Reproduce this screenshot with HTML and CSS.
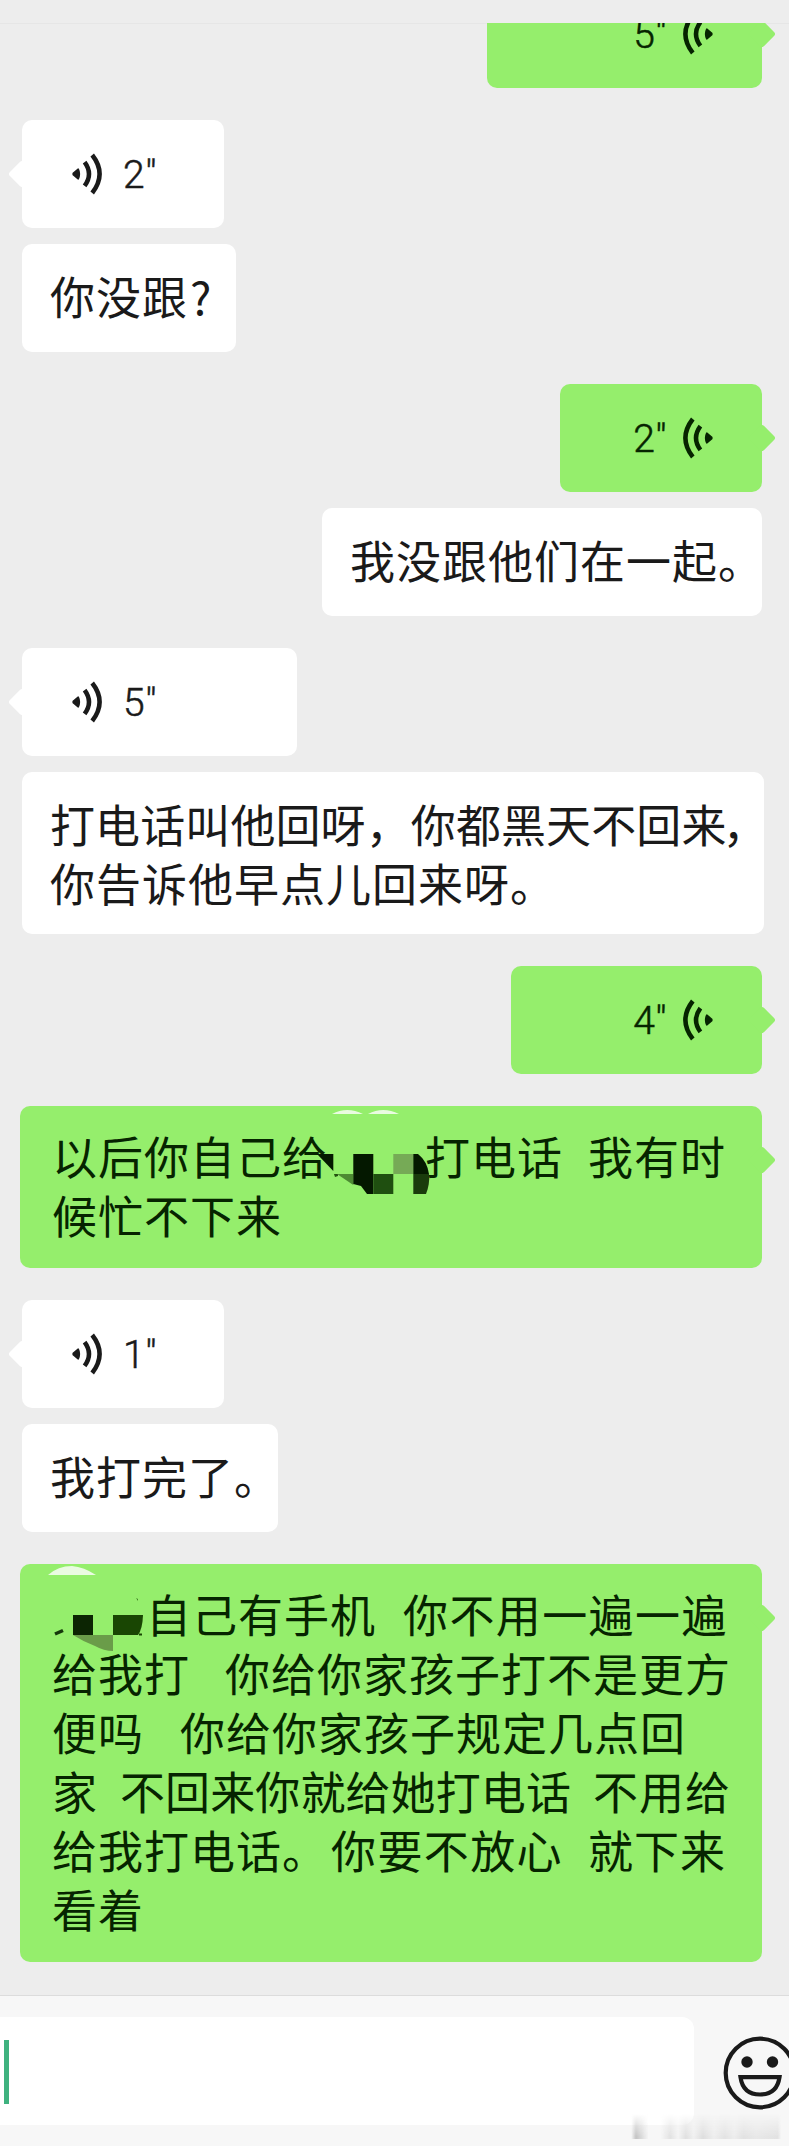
FILE: index.html
```html
<!DOCTYPE html>
<html lang="zh-CN">
<head>
<meta charset="utf-8">
<title>聊天</title>
<link rel="stylesheet" href="styles.css">
</head>
<body>
<svg class="defs" width="0" height="0">
  <symbol id="wave" viewBox="0 0 30 42">
    <path d="M1.500 20 L6.200 16.200 Q8.500 21 6.200 25.800 L1.500 22 Q0.800 21 1.500 20Z" fill="currentColor" stroke="currentColor" stroke-width="1.600" stroke-linejoin="round"/>
    <path d="M12.600 9.100 Q21.400 21 12.600 32.900 M20.200 2 Q35 21 20.200 40" fill="none" stroke="currentColor" stroke-width="4.500"/>
  </symbol>
</svg>
<div class="screen">
  <header class="top"></header>
  <main class="chat">
    <div class="bubble voice mine cut w275"><span class="sec">5"</span><svg class="wave"><use href="#wave"/></svg></div>

    <div class="bubble voice theirs w202"><svg class="wave"><use href="#wave"/></svg><span class="sec">2"</span></div>
    <div class="bubble note left w214"><p class="line">你没跟<span class="gap2">?</span></p></div>

    <div class="bubble voice mine w202"><span class="sec">2"</span><svg class="wave"><use href="#wave"/></svg></div>
    <div class="bubble note right w440"><p class="line">我没跟他们在一起。</p></div>

    <div class="bubble voice theirs w275"><svg class="wave"><use href="#wave"/></svg><span class="sec">5"</span></div>
    <div class="bubble note left w742"><p class="line tight">打电话叫他回呀，你都黑天不回来<span class="pull">，</span></p><p class="line">你告诉他早点儿回来呀。</p></div>

    <div class="bubble voice mine w251"><span class="sec">4"</span><svg class="wave"><use href="#wave"/></svg></div>
    <div class="bubble text mine w742">
      <p class="line"><span>以后你自己给</span><span class="gap97">打电话</span><span class="gap25">我有时</span></p>
      <p class="line"><span>候忙不下来</span></p>
      <svg class="mosaic" width="742" height="162" viewBox="20 1106 742 162">
        <path d="M332 1114 Q347 1106 363 1114Z M368 1114 Q383 1106 399 1114Z" fill="#e9fbe0"/>
        <path d="M325 1154 H334 V1180 H325Z" fill="#95ee6c"/>
        <path d="M317 1154 H333.300 V1171Z" fill="#041800"/>
        <path d="M334 1174 H338 V1176 L335 1177Z" fill="#23500f"/>
        <path d="M337 1174 H353.300 V1185Z" fill="#4d8a33"/>
        <path d="M353.300 1154 H373.300 V1194 H367 L361 1186 L353.300 1184Z" fill="#041800"/>
        <path d="M373.300 1174 h20 v20 h-20Z" fill="#1f4f10"/>
        <path d="M393.300 1154 h20 v20 h-20Z" fill="#76aa56"/>
        <path d="M413.300 1154 H418 Q427 1161 429 1174 H413.300Z" fill="#051900"/>
        <path d="M413.300 1174 H429 Q430 1184 426 1194 H413.300Z" fill="#1a3b0c"/>
      </svg>
    </div>

    <div class="bubble voice theirs w202"><svg class="wave"><use href="#wave"/></svg><span class="sec">1"</span></div>
    <div class="bubble note left w256"><p class="line">我打完了。</p></div>

    <div class="bubble text mine w742">
      <p class="line"><span class="gap94">自己有手机</span><span class="gap27 loose">你不用一遍一遍</span></p>
      <p class="line"><span>给我打</span><span class="gap35">你给你家孩子打不是更方</span></p>
      <p class="line"><span>便吗</span><span class="gap36">你给你家孩子规定几点回</span></p>
      <p class="line"><span>家</span><span class="gap22 tight">不回来你就给她打电话</span><span class="gap22">不用给</span></p>
      <p class="line"><span>给我打电话。</span><span class="gap3 loose">你要不放心</span><span class="gap25">就下来</span></p>
      <p class="line"><span>看着</span></p>
      <svg class="mosaic" width="742" height="398" viewBox="20 1564 742 398">
        <path d="M48 1575 Q58 1566 72 1566 Q84 1567 96 1575Z" fill="#eafbe2"/>
        <path d="M55 1634 L63 1630.500" stroke="#15380a" stroke-width="3.500"/>
        <path d="M73 1615 h20 v20 h-20Z" fill="#0c2503"/>
        <path d="M113 1615 H143 Q142.500 1629 138 1635 H113Z" fill="#194603"/>
        <path d="M139 1633.500 h3 v2 h-3Z" fill="#194603"/>
        <path d="M73 1635 H113 V1651 Q104 1651 95 1646 Q84 1642 73 1635Z" fill="#6a9c49"/>
        <path d="M136 1598 l2 1 v2Z" fill="#3d7a22"/>
      </svg>
    </div>
  </main>
  <footer class="composer">
    <div class="field"><i class="caret"></i></div>
    <svg class="smile" width="74" height="74" viewBox="0 0 74 74">
      <circle cx="37" cy="37" r="34.300" fill="none" stroke="#1a1a1a" stroke-width="4.200"/>
      <circle cx="24" cy="26" r="5.700" fill="#1a1a1a"/>
      <circle cx="49.500" cy="26" r="5.700" fill="#1a1a1a"/>
      <path d="M17.500 41.200 H56.500 Q54 58.500 37 58.500 Q20 58.500 17.500 41.200Z" fill="none" stroke="#1a1a1a" stroke-width="4.200"/>
    </svg>
    <div class="smudge"></div>
  </footer>
</div>
</body>
</html>
```

FILE: styles.css
```css
* { box-sizing: border-box; margin: 0; padding: 0; }

body {
  background: #ededed;
  color: #1a1a1a;
  font-family: "Noto Sans CJK SC", sans-serif;
}

.defs { position: absolute; }

.screen {
  display: flex;
  flex-direction: column;
  width: 789px;
  height: 2146px;
  overflow: hidden;
}

.top {
  flex: none;
  height: 24px;
  border-bottom: 1px solid #e6e6e6;
}

.chat {
  display: flex;
  flex-direction: column;
  flex: 1;
  margin-top: -1px;
  padding: 0 26px 0 22px;
  overflow: hidden;
}

.bubble {
  position: relative;
  flex: none;
  min-height: 108px;
  margin-top: 32px;
  border-radius: 10px;
  background: #fff;
}

.note { margin-top: 16px; padding: 22px 0 22px 28px; }
.note.w214, .note.w440, .note.w256 { height: 108px; }
.right, .mine { align-self: flex-end; }
.mine { margin-right: 1px; background: #95ee6c; color: #062400; }
.right { margin-right: 1px; }
.text { padding: 20px 0 24px 32px; }

.voice {
  display: flex;
  align-items: center;
  gap: 21px;
  padding-left: 50px;
}

.voice.mine {
  justify-content: flex-end;
  gap: 16px;
  padding: 0 49px 0 0;
}

.bubble.cut { margin-top: -43px; }

.wave { width: 30px; height: 42px; }
.mine .wave { transform: scaleX(-1); }

.sec {
  padding-top: 2px;
  font: 300 39px/60px Roboto, sans-serif;
  letter-spacing: 0.5px;
  -webkit-text-stroke: 0.5px currentColor;
}

.voice::after, .text.mine::after {
  content: "";
  position: absolute;
  top: 44px;
  width: 20px;
  height: 20px;
  border-radius: 3px;
  background: inherit;
  transform: rotate(45deg);
}

.theirs::after { left: -10px; }
.mine::after { right: -10px; }

.line {
  display: flex;
  height: 59px;
  font-size: 45px;
  line-height: 59px;
  letter-spacing: 1px;
  white-space: nowrap;
}

.tight { letter-spacing: 0.1px; }
.loose { letter-spacing: 1.4px; }
.pull { margin-left: -4px; }

.gap2 { margin-left: 2px; }
.gap3 { margin-left: 3px; }
.gap22 { margin-left: 22px; }
.gap25 { margin-left: 25px; }
.gap27 { margin-left: 27px; }
.gap35 { margin-left: 35px; }
.gap36 { margin-left: 36px; }
.gap94 { margin-left: 94px; }
.gap97 { margin-left: 97px; }

.w202 { width: 202px; }
.w214 { width: 214px; }
.w251 { width: 251px; }
.w256 { width: 256px; }
.w275 { width: 275px; }
.w440 { width: 440px; }
.w742 { width: 742px; }

.mosaic { position: absolute; left: 0; top: 0; }

.composer {
  position: relative;
  display: flex;
  flex: none;
  align-items: flex-start;
  height: 151px;
  padding-top: 21px;
  border-top: 1px solid #dcdcdc;
  background: #f7f7f7;
}

.field {
  flex: none;
  width: 694px;
  height: 108px;
  padding: 23px 0 0 4px;
  border-radius: 0 12px 12px 0;
  background: #fff;
}

.caret {
  display: block;
  width: 5px;
  height: 64px;
  background: #3fb27f;
}

.smile { flex: none; margin: 19px 0 0 29px; }

.smudge {
  position: absolute;
  left: 625px;
  top: 118px;
  width: 156px;
  height: 25px;
  background: linear-gradient(90deg, transparent 0 4%, #c4c4c4 7%, #d0d0d0 9%, transparent 15% 23%, #e2e2e2 29%, #f4f4f4 34%, #e0e0e0 39%, #f0f0f0 44%, #dedede 50%, #eee 57%, #e3e3e3 64%, #ededed 70%, #e2e2e2 76%, #e8e8e8 84%, #e2e2e2 98%, transparent);
  -webkit-mask-image: linear-gradient(transparent, #000 90%);
  mask-image: linear-gradient(transparent, #000 90%);
}
```
